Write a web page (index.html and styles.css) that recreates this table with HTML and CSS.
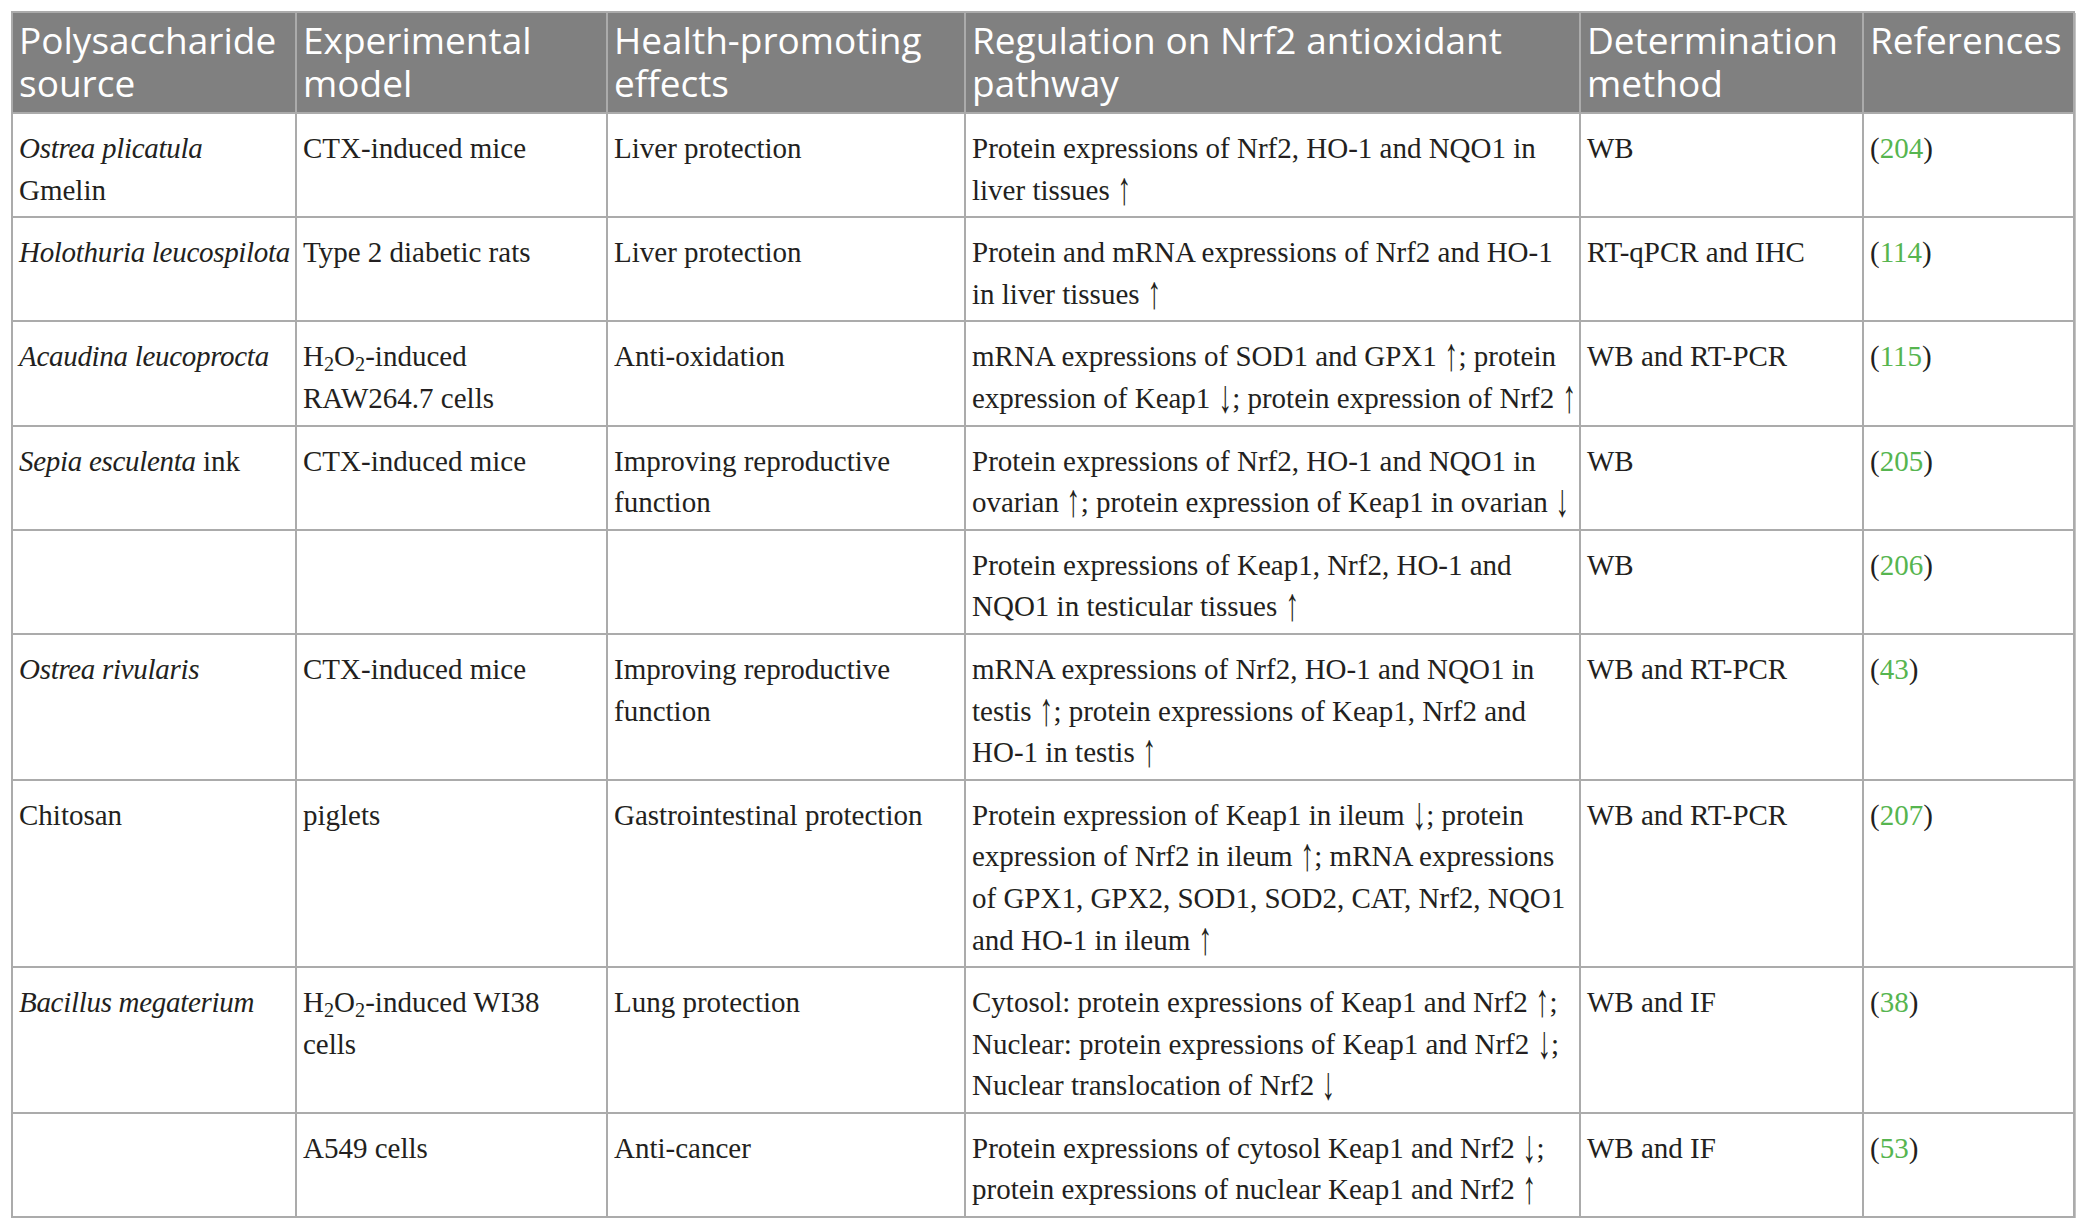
FILE: index.html
```html
<!DOCTYPE html>
<html lang="en">
<head>
  <meta charset="UTF-8">
  <meta name="viewport" content="width=device-width, initial-scale=1.0">
  <title>Marine polysaccharides and the Nrf2 pathway</title>
  <link rel="stylesheet" href="styles.css">
</head>
<body>

  <!-- Table: polysaccharide sources and Nrf2 regulation -->
  <table class="data-table">
    <colgroup>
      <col class="col-source">
      <col class="col-model">
      <col class="col-effect">
      <col class="col-pathway">
      <col class="col-method">
      <col class="col-ref">
    </colgroup>
    <thead>
      <tr>
        <th>Polysaccharide source</th>
        <th>Experimental model</th>
        <th>Health-promoting effects</th>
        <th>Regulation on Nrf2 antioxidant pathway</th>
        <th>Determination method</th>
        <th>References</th>
      </tr>
    </thead>
    <tbody>
      <tr>
        <td><em>Ostrea plicatula</em> Gmelin</td>
        <td>CTX-induced mice</td>
        <td>Liver protection</td>
        <td class="pathway">Protein expressions of Nrf2, HO-1 and NQO1 in<br>liver tissues <span class="arrow">↑</span></td>
        <td>WB</td>
        <td>(<a href="#ref204" class="ref">204</a>)</td>
      </tr>
      <tr>
        <td class="nowrap"><em>Holothuria leucospilota</em></td>
        <td>Type 2 diabetic rats</td>
        <td>Liver protection</td>
        <td class="pathway">Protein and mRNA expressions of Nrf2 and HO-1<br>in liver tissues <span class="arrow">↑</span></td>
        <td>RT-qPCR and IHC</td>
        <td>(<a href="#ref114" class="ref">114</a>)</td>
      </tr>
      <tr>
        <td><em>Acaudina leucoprocta</em></td>
        <td>H<sub>2</sub>O<sub>2</sub>-induced<br>RAW264.7 cells</td>
        <td>Anti-oxidation</td>
        <td class="pathway">mRNA expressions of SOD1 and GPX1 <span class="arrow">↑</span>; protein<br>expression of Keap1 <span class="arrow">↓</span>; protein expression of Nrf2 <span class="arrow">↑</span></td>
        <td>WB and RT-PCR</td>
        <td>(<a href="#ref115" class="ref">115</a>)</td>
      </tr>
      <tr>
        <td><em>Sepia esculenta</em> ink</td>
        <td>CTX-induced mice</td>
        <td>Improving reproductive function</td>
        <td class="pathway">Protein expressions of Nrf2, HO-1 and NQO1 in<br>ovarian <span class="arrow">↑</span>; protein expression of Keap1 in ovarian <span class="arrow">↓</span></td>
        <td>WB</td>
        <td>(<a href="#ref205" class="ref">205</a>)</td>
      </tr>
      <tr>
        <td></td>
        <td></td>
        <td></td>
        <td class="pathway">Protein expressions of Keap1, Nrf2, HO-1 and<br>NQO1 in testicular tissues <span class="arrow">↑</span></td>
        <td>WB</td>
        <td>(<a href="#ref206" class="ref">206</a>)</td>
      </tr>
      <tr>
        <td><em>Ostrea rivularis</em></td>
        <td>CTX-induced mice</td>
        <td>Improving reproductive function</td>
        <td class="pathway">mRNA expressions of Nrf2, HO-1 and NQO1 in<br>testis <span class="arrow">↑</span>; protein expressions of Keap1, Nrf2 and<br>HO-1 in testis <span class="arrow">↑</span></td>
        <td>WB and RT-PCR</td>
        <td>(<a href="#ref43" class="ref">43</a>)</td>
      </tr>
      <tr>
        <td>Chitosan</td>
        <td>piglets</td>
        <td>Gastrointestinal protection</td>
        <td class="pathway">Protein expression of Keap1 in ileum <span class="arrow">↓</span>; protein<br>expression of Nrf2 in ileum <span class="arrow">↑</span>; mRNA expressions<br>of GPX1, GPX2, SOD1, SOD2, CAT, Nrf2, NQO1<br>and HO-1 in ileum <span class="arrow">↑</span></td>
        <td>WB and RT-PCR</td>
        <td>(<a href="#ref207" class="ref">207</a>)</td>
      </tr>
      <tr>
        <td><em>Bacillus megaterium</em></td>
        <td>H<sub>2</sub>O<sub>2</sub>-induced WI38<br>cells</td>
        <td>Lung protection</td>
        <td class="pathway">Cytosol: protein expressions of Keap1 and Nrf2 <span class="arrow">↑</span>;<br>Nuclear: protein expressions of Keap1 and Nrf2 <span class="arrow">↓</span>;<br>Nuclear translocation of Nrf2 <span class="arrow">↓</span></td>
        <td>WB and IF</td>
        <td>(<a href="#ref38" class="ref">38</a>)</td>
      </tr>
      <tr>
        <td></td>
        <td>A549 cells</td>
        <td>Anti-cancer</td>
        <td class="pathway">Protein expressions of cytosol Keap1 and Nrf2 <span class="arrow">↓</span>;<br>protein expressions of nuclear Keap1 and Nrf2 <span class="arrow">↑</span></td>
        <td>WB and IF</td>
        <td>(<a href="#ref53" class="ref">53</a>)</td>
      </tr>
    </tbody>
  </table>

</body>
</html>
```

FILE: styles.css
```css
/* Colours */
:root {
  --text-color: #231f20;
  --head-bg: #808080;
  --head-text: #ffffff;
  --rule-color: #ababab;
  --link-color: #56b54f;
}

/* Base styles */
body {
  margin: 11px;
  background: #ffffff;
  color: var(--text-color);
}

/* Table */
.data-table {
  border-collapse: collapse;
  table-layout: fixed;
  width: 2062px;
  box-shadow: 2px 2px 0 #c4c4c4;
}

.col-source  { width: 284px; }
.col-model   { width: 311px; }
.col-effect  { width: 358px; }
.col-pathway { width: 615px; }
.col-method  { width: 283px; }
.col-ref     { width: 211px; }

.data-table th,
.data-table td {
  border: 2px solid var(--rule-color);
  text-align: left;
  vertical-align: top;
}

/* Header row */
.data-table th {
  background-color: var(--head-bg);
  color: var(--head-text);
  font-family: 'Open Sans', 'Noto Sans', sans-serif;
  font-size: 37px;
  font-weight: 400;
  line-height: 42.5px;
  padding: 6px 4px 8px 6px;
}

/* Body cells */
.data-table td {
  font-family: 'Liberation Serif', 'Times New Roman', serif;
  font-size: 29px;
  line-height: 41.6px;
  padding: 14px 2px 5px 6px;
}

.data-table td.pathway,
.data-table td.nowrap {
  white-space: nowrap;
}

.data-table em {
  font-style: italic;
  letter-spacing: -0.3px;
}

.data-table sub {
  font-size: 0.7em;
  line-height: 0;
  vertical-align: -0.25em;
}

/* Up / down arrows drawn taller than the serif glyph */
.arrow {
  display: inline-block;
  line-height: 0;
  font-weight: 300;
  transform: scale(0.95, 1.6) translateY(-1px);
}

.ref {
  color: var(--link-color);
  text-decoration: none;
}
```
